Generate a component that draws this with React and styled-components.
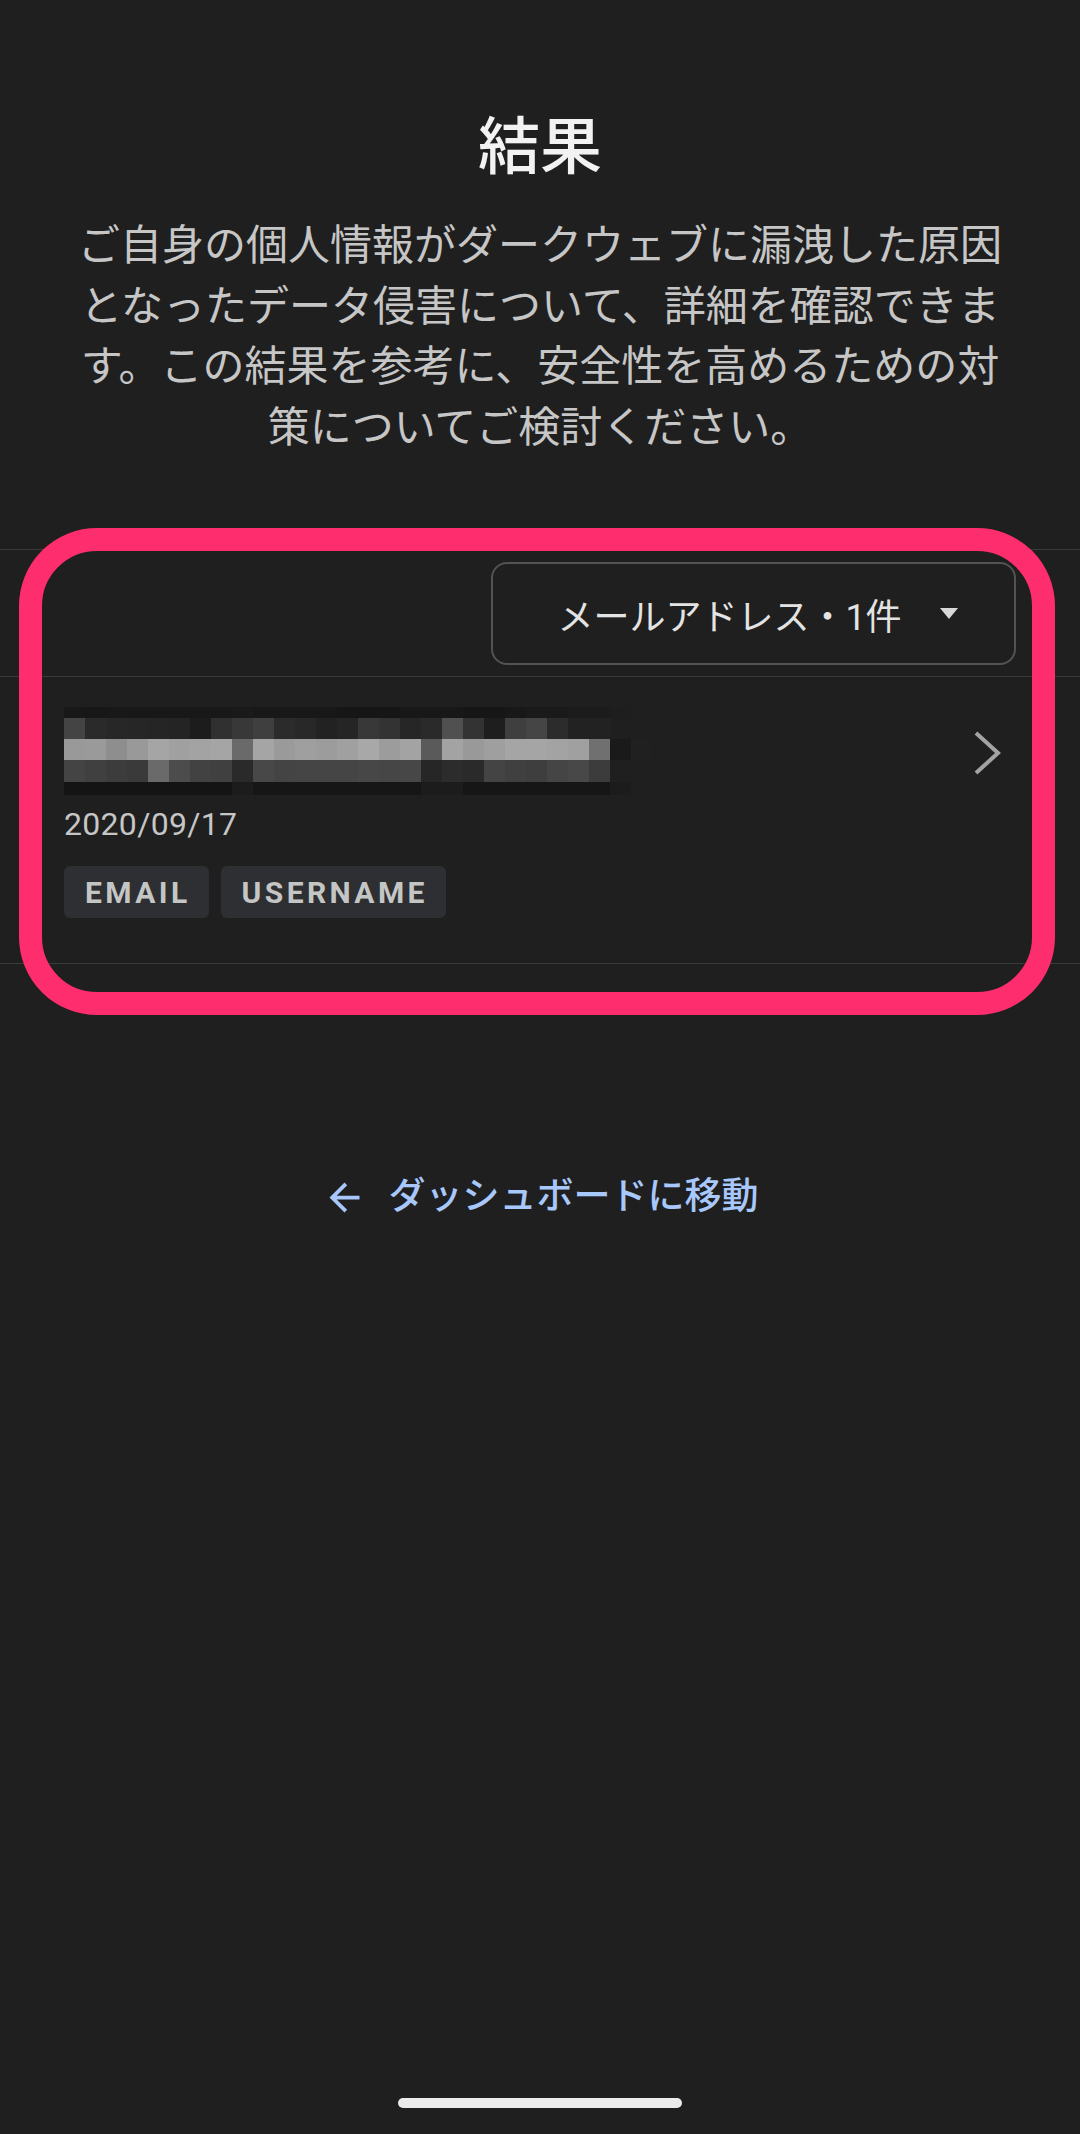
import React from "react";
import styled, { createGlobalStyle } from "styled-components";

const GlobalStyle = createGlobalStyle`
  html, body {
    margin: 0;
    padding: 0;
    background: #1f1f1f;
  }
  * {
    box-sizing: border-box;
  }
`;

const Page = styled.div`
  position: relative;
  min-height: 2134px;
  display: flex;
  flex-direction: column;
  background: #1f1f1f;
  font-family: Roboto, "Noto Sans CJK JP", sans-serif;
`;

const Header = styled.header`
  padding-top: 108px;
  text-align: center;
`;

const Title = styled.h1`
  margin: 0;
  font-size: 62px;
  line-height: 80px;
  font-weight: 500;
  color: #f2f2f2;
`;

const Description = styled.p`
  margin: 28px 0 0;
  font-size: 42px;
  line-height: 60.5px;
  font-weight: 400;
  color: #c6c6c6;
`;

const Results = styled.section`
  position: relative;
  margin-top: 91px;
  border-top: 1px solid #3a3a3a;
`;

const Toolbar = styled.div`
  display: flex;
  justify-content: flex-end;
  padding: 12px 64px 11px;
  border-bottom: 1px solid #3a3a3a;
`;

const Dropdown = styled.button`
  width: 525px;
  height: 103px;
  display: flex;
  align-items: center;
  justify-content: center;
  gap: 38px;
  padding: 0 0 0 8px;
  background: transparent;
  border: 2px solid #535353;
  border-radius: 16px;
  color: #e3e3e3;
  font-family: inherit;
  font-size: 36px;
  font-weight: 400;
`;

const Item = styled.div`
  display: flex;
  align-items: flex-start;
  justify-content: space-between;
  padding: 30px 76px 45px 64px;
  border-bottom: 1px solid #3a3a3a;
`;

const ItemBody = styled.div`
  display: flex;
  flex-direction: column;
`;

const Mosaic = styled.svg`
  display: block;
`;

const DateText = styled.div`
  margin-top: 9px;
  font-size: 32px;
  line-height: 40px;
  color: #c6c6c6;
  letter-spacing: 0.3px;
`;

const Tags = styled.div`
  display: flex;
  gap: 12px;
  margin-top: 22px;
`;

const Tag = styled.span`
  height: 52px;
  display: inline-flex;
  align-items: center;
  padding: 0 18px 0 21px;
  border-radius: 6px;
  background: #2e2f32;
  color: #c4c6c5;
  font-size: 30px;
  font-weight: 700;
  letter-spacing: 3.4px;
`;

const Chevron = styled.svg`
  margin-top: 24px;
  flex: none;
`;

const Highlight = styled.div`
  position: absolute;
  top: -22px;
  bottom: -51px;
  left: 19px;
  right: 25px;
  border: 23px solid #fe2d6d;
  border-radius: 78px;
  pointer-events: none;
`;

const BackLink = styled.a`
  align-self: center;
  margin-top: 208px;
  display: flex;
  align-items: center;
  gap: 22px;
  color: #a8c7fa;
  font-size: 37px;
  line-height: 50px;
  font-weight: 500;
  text-decoration: none;
`;

const HomeBar = styled.div`
  align-self: center;
  margin-top: auto;
  margin-bottom: 26px;
  width: 284px;
  height: 10px;
  border-radius: 5px;
  background: #ebebeb;
`;

const mosaicRows = [
  { h: 11, v: [24, 23, 24, 24, 24, 24, 24, 24, 26, 24, 24, 24, 24, 22, 22, 22, 24, 24, 24, 22, 22, 24, 26, 26, 28, 28, 30, 31] },
  { h: 21, v: [68, 42, 39, 38, 37, 36, 28, 48, 56, 63, 43, 40, 34, 37, 56, 51, 38, 42, 80, 51, 30, 63, 69, 44, 34, 34, 31, 31] },
  { h: 21, v: [153, 154, 142, 153, 165, 160, 163, 165, 106, 165, 154, 159, 156, 160, 168, 156, 163, 90, 163, 153, 159, 165, 165, 163, 160, 112, 26, 32] },
  { h: 22, v: [68, 64, 60, 58, 106, 76, 66, 64, 42, 72, 68, 69, 69, 69, 71, 70, 71, 38, 44, 42, 68, 64, 62, 69, 72, 60, 31, 31] },
  { h: 13, v: [20, 20, 20, 20, 20, 20, 20, 20, 28, 22, 22, 22, 22, 22, 22, 22, 22, 28, 28, 22, 22, 22, 22, 22, 22, 22, 28, 31] },
];

const CELL = 21;

const BlurredEmail = () => {
  let y = 0;
  const rects = [];
  mosaicRows.forEach((row, r) => {
    row.v.forEach((g, c) => {
      rects.push(
        <rect
          key={`${r}-${c}`}
          x={c * CELL}
          y={y}
          width={CELL + 0.5}
          height={row.h + 0.5}
          fill={`rgb(${g},${g},${g})`}
        />
      );
    });
    y += row.h;
  });
  return (
    <Mosaic width={28 * CELL} height={y} viewBox={`0 0 ${28 * CELL} ${y}`}>
      {rects}
    </Mosaic>
  );
};

export default function App() {
  return (
    <>
      <GlobalStyle />
      <Page>
        <Header>
          <Title>結果</Title>
          <Description>
            ご自身の個人情報がダークウェブに漏洩した原因
            <br />
            となったデータ侵害について、詳細を確認できま
            <br />
            す。この結果を参考に、安全性を高めるための対
            <br />
            策についてご検討ください。
          </Description>
        </Header>

        <Results>
          <Toolbar>
            <Dropdown>
              <span>メールアドレス・1件</span>
              <svg width="18" height="11" viewBox="0 0 18 11">
                <path d="M0 0h18L9 11z" fill="#d8d8d8" />
              </svg>
            </Dropdown>
          </Toolbar>
          <Item>
            <ItemBody>
              <BlurredEmail />
              <DateText>2020/09/17</DateText>
              <Tags>
                <Tag>EMAIL</Tag>
                <Tag>USERNAME</Tag>
              </Tags>
            </ItemBody>
            <Chevron width="32" height="44" viewBox="0 0 32 44">
              <polyline
                points="4,2 26,22 4,42"
                fill="none"
                stroke="#a3a3a3"
                strokeWidth="4"
              />
            </Chevron>
          </Item>
          <Highlight />
        </Results>

        <BackLink href="#">
          <svg width="45" height="45" viewBox="0 0 24 24">
            <path
              d="M20 11H7.83l5.59-5.59L12 4l-8 8 8 8 1.41-1.41L7.83 13H20v-2z"
              fill="#a8c7fa"
            />
          </svg>
          <span>ダッシュボードに移動</span>
        </BackLink>

        <HomeBar />
      </Page>
    </>
  );
}
